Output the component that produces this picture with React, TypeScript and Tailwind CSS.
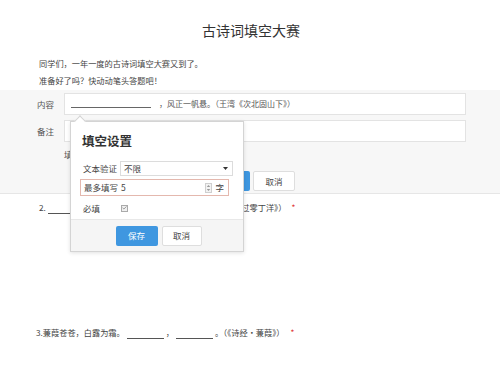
import { Check } from 'lucide-react';

const font = { fontFamily: '"Noto Sans CJK SC", "Noto Sans", sans-serif' };

const Blank = ({ w }: { w: string }) => (
  <span className={`inline-block border-b border-[#555] ${w} h-[9px] mx-[2px]`} />
);

const SettingsPopup = () => (
  <div className="absolute left-[70px] top-[121px] w-[174px] h-[131px] bg-white border border-[#d4d4d4] shadow-[0_1px_4px_rgba(0,0,0,0.12)] flex flex-col">
    {/* arrow */}
    <div className="absolute left-[5px] top-[-5px] w-[8px] h-[8px] bg-white border-l border-t border-[#d4d4d4] rotate-45" />
    <div className="pl-[11px] pt-[10px] text-[12.5px] leading-[17px] font-bold text-[#333]">填空设置</div>
    <div className="flex items-center mt-[12px] pl-[12px] text-[8.5px] text-[#444]">
      <span className="w-[37px]">文本验证</span>
      <div className="w-[113px] h-[15px] border border-[#dcdcdc] flex items-center justify-between pl-[3px] pr-[4px]">
        <span>不限</span>
        <svg width="5" height="3" viewBox="0 0 5 3">
          <path d="M0 0 L5 0 L2.5 3 Z" fill="#333" />
        </svg>
      </div>
    </div>
    <div className="mt-[3px] ml-[9px] w-[149px] h-[17px] border border-[#e4b8ae] flex items-center pl-[3px] pr-[4px] text-[8.5px] text-[#444]">
      <span className="w-[37px]">最多填写</span>
      <span className="flex-1">5</span>
      <svg width="7" height="10" viewBox="0 0 7 10" className="mr-[3px]">
        <rect x="0.5" y="0.5" width="6" height="9" fill="#f3f3f3" stroke="#cfcfcf" />
        <path d="M1.8 4 L3.5 2 L5.2 4 Z" fill="#999" />
        <path d="M1.8 6 L3.5 8 L5.2 6 Z" fill="#999" />
      </svg>
      <span>字</span>
    </div>
    <div className="flex items-center mt-[6px] pl-[12px] text-[8.5px] text-[#444] h-[12px]">
      <span className="w-[38px]">必填</span>
      <span className="w-[7px] h-[7px] border border-[#aaa] bg-[#f0f0f0] flex items-center justify-center">
        <Check className="w-[6px] h-[6px] text-[#666]" strokeWidth={3} />
      </span>
    </div>
    <div className="mt-auto h-[32px] bg-[#f5f5f5] border-t border-[#e8e8e8] flex items-center justify-center gap-[4px] pl-[3px]">
      <button className="w-[42px] h-[20px] bg-[#3f97e0] text-white text-[8.5px] rounded-[2px]">保存</button>
      <button className="w-[40px] h-[20px] bg-white border border-[#dedede] text-[#444] text-[8.5px] rounded-[2px]">取消</button>
    </div>
  </div>
);

const App = () => {
  return (
    <div className="relative w-[500px] h-[382px] bg-white overflow-hidden text-[#333]" style={font}>
      <h1 className="pt-[21px] text-center text-[14px] leading-[18px] text-[#333] pl-[2px]">古诗词填空大赛</h1>

      <div className="mt-[16px] pl-[39px] text-[8.2px] leading-[17px] text-[#444]">
        <p>同学们，一年一度的古诗词填空大赛又到了。</p>
        <p>准备好了吗？快动动笔头答题吧！</p>
      </div>

      <div className="mt-[1px] h-[104px] bg-[#f7f7f7] border-b border-[#e6e6e6] pt-[3px] flex flex-col">
        <div className="flex items-center">
          <span className="w-[64px] pl-[37px] text-[8.5px] text-[#555]">内容</span>
          <div className="w-[402px] h-[22px] bg-white border border-[#e3e3e3] flex items-center pl-[6px] text-[8px] text-[#555]">
            <span className="inline-block w-[80px] border-b border-[#666] h-[8px] mr-[8px]" />
            <span>，风正一帆悬。（王湾《次北固山下》）</span>
          </div>
        </div>
        <div className="flex items-center mt-[5px]">
          <span className="w-[64px] pl-[37px] text-[8.5px] text-[#555]">备注</span>
          <div className="w-[402px] h-[22px] bg-white border border-[#e3e3e3]" />
        </div>
        <div className="pl-[64px] mt-[6px] text-[8.5px] leading-[12px] text-[#555]">填写说明</div>
        <div className="flex items-center ml-[210px] mt-[11px] gap-[3px]">
          <button className="w-[40px] h-[20px] bg-[#3f97e0] rounded-[2px]" aria-label="确定" />
          <button className="w-[42px] h-[20px] bg-white border border-[#dedede] text-[#444] text-[8.5px] rounded-[2px]">取消</button>
        </div>
      </div>

      <div className="mt-[6px] pl-[39px] text-[8.2px] leading-[14px] text-[#444] flex items-end">
        <span>2.</span>
        <Blank w="w-[81px]" />
        <span>，留取丹心照汗青。（文天祥《过零丁洋》）</span>
        <span className="text-[#e03a3a] ml-[5px]">*</span>
      </div>

      <div className="mt-[111px] pl-[36px] text-[8.2px] leading-[14px] text-[#444] flex items-end">
        <span>3.蒹葭苍苍，白露为霜。</span>
        <Blank w="w-[37px]" />
        <span>，</span>
        <Blank w="w-[37px]" />
        <span>。（《诗经·蒹葭》）</span>
        <span className="text-[#e03a3a] ml-[6px]">*</span>
      </div>

      <SettingsPopup />
    </div>
  );
};

export default App;
